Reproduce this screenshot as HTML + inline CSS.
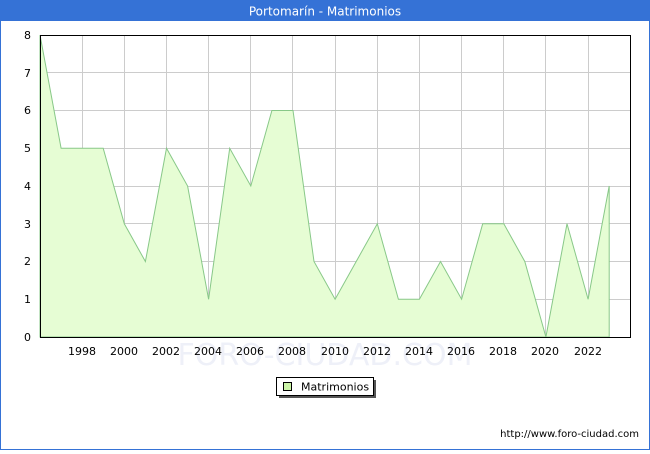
<!DOCTYPE html>
<html><head><meta charset="utf-8"><style>
body{margin:0;width:650px;height:450px;overflow:hidden;background:#fff;font-family:"DejaVu Sans","Liberation Sans",sans-serif}
</style></head><body>
<svg width="650" height="450" xmlns="http://www.w3.org/2000/svg" font-family="DejaVu Sans, Liberation Sans, sans-serif">
<rect x="0.5" y="0.5" width="649" height="449" fill="#fff" stroke="#3572d6"/>
<rect x="0" y="0" width="650" height="21" fill="#3572d6"/>
<text x="325" y="15.5" fill="#fff" font-size="12" text-anchor="middle">Portomarín - Matrimonios</text>
<g stroke="#ccc" stroke-width="1">
<line x1="40" y1="299.5" x2="630" y2="299.5"/><line x1="40" y1="261.5" x2="630" y2="261.5"/>
<line x1="40" y1="223.5" x2="630" y2="223.5"/><line x1="40" y1="186.5" x2="630" y2="186.5"/>
<line x1="40" y1="148.5" x2="630" y2="148.5"/><line x1="40" y1="110.5" x2="630" y2="110.5"/>
<line x1="40" y1="72.5" x2="630" y2="72.5"/>
<line x1="82.5" y1="35" x2="82.5" y2="337"/><line x1="124.5" y1="35" x2="124.5" y2="337"/>
<line x1="166.5" y1="35" x2="166.5" y2="337"/><line x1="208.5" y1="35" x2="208.5" y2="337"/>
<line x1="250.5" y1="35" x2="250.5" y2="337"/><line x1="292.5" y1="35" x2="292.5" y2="337"/>
<line x1="335.5" y1="35" x2="335.5" y2="337"/><line x1="377.5" y1="35" x2="377.5" y2="337"/>
<line x1="419.5" y1="35" x2="419.5" y2="337"/><line x1="461.5" y1="35" x2="461.5" y2="337"/>
<line x1="503.5" y1="35" x2="503.5" y2="337"/><line x1="545.5" y1="35" x2="545.5" y2="337"/>
<line x1="588.5" y1="35" x2="588.5" y2="337"/>
</g>
<text x="325" y="365" font-size="30" fill="#eef0f8" text-anchor="middle">FORO-CIUDAD.COM</text>
<polygon fill="#e6fdd4" stroke="#88c888" stroke-width="1" points="40,337 40,35 61.1,148.25 82.2,148.25 103.2,148.25 124.3,223.75 145.4,261.5 166.5,148.25 187.6,186 208.6,299.25 229.7,148.25 250.8,186 271.9,110.5 293,110.5 314,261.5 335.1,299.25 356.2,261.5 377.3,223.75 398.4,299.25 419.4,299.25 440.5,261.5 461.6,299.25 482.7,223.75 503.8,223.75 524.8,261.5 545.9,337 567,223.75 588.1,299.25 609.2,186 609.2,337"/>
<rect x="40.5" y="35.5" width="590" height="302" fill="none" stroke="#000"/>
<g font-size="11" fill="#000" text-anchor="end">
<text x="31" y="341">0</text><text x="31" y="303">1</text><text x="31" y="265">2</text><text x="31" y="228">3</text><text x="31" y="190">4</text><text x="31" y="152">5</text><text x="31" y="114">6</text><text x="31" y="77">7</text><text x="31" y="39">8</text>
</g>
<g font-size="11" fill="#000" text-anchor="middle">
<text x="82" y="355">1998</text><text x="124" y="355">2000</text><text x="166" y="355">2002</text><text x="208" y="355">2004</text><text x="250" y="355">2006</text><text x="292" y="355">2008</text><text x="335" y="355">2010</text><text x="377" y="355">2012</text><text x="419" y="355">2014</text><text x="461" y="355">2016</text><text x="503" y="355">2018</text><text x="545" y="355">2020</text><text x="588" y="355">2022</text>
</g>
<rect x="279" y="380" width="97" height="18" fill="#555"/>
<rect x="276.5" y="377.5" width="97" height="18" fill="#fff" stroke="#000"/>
<rect x="283.5" y="382.5" width="8" height="8" fill="#ccf5a8" stroke="#000"/>
<text x="301" y="390.5" font-size="11">Matrimonios</text>
<text x="639" y="437" font-size="10" text-anchor="end">http://www.foro-ciudad.com</text>
</svg>
</body></html>
